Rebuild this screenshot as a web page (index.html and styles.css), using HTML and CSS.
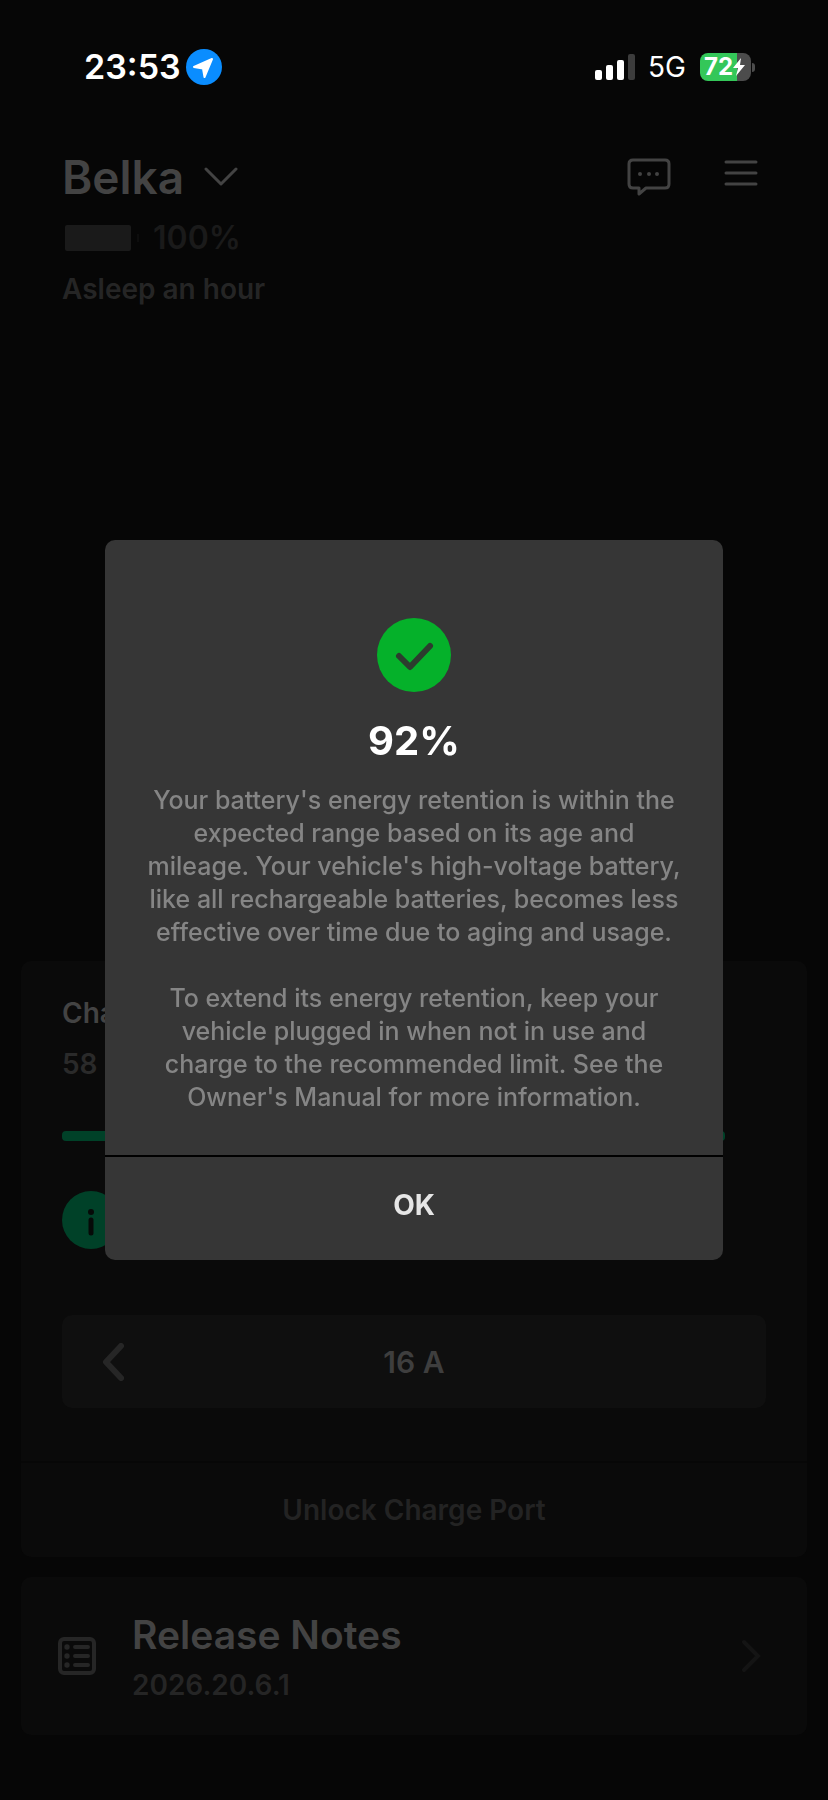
FILE: index.html
```html
<!DOCTYPE html>
<html lang="en">
<head>
    <meta charset="UTF-8">
    <meta name="viewport" content="width=device-width, initial-scale=1.0">
    <title>Belka</title>
    <link rel="stylesheet" href="styles.css">
</head>
<body>

    <!-- Status bar -->
    <div class="status-bar">
        <div class="status-left">
            <span class="time">23:53</span>
            <svg class="location" width="36" height="36" viewBox="0 0 36 36">
                <circle cx="18" cy="18" r="18" fill="#0a8dff"/>
                <path d="M26 10 L18.5 28 L17 19.5 L8 18 Z" fill="#fff" stroke="#fff" stroke-width="2" stroke-linejoin="round"/>
            </svg>
        </div>
        <div class="status-right">
            <svg width="41" height="28" viewBox="0 0 41 28">
                <rect x="0" y="17" width="7" height="10" rx="2" fill="#fff"/>
                <rect x="11" y="12" width="7" height="15" rx="2" fill="#fff"/>
                <rect x="22" y="7" width="7" height="20" rx="2" fill="#fff"/>
                <rect x="33" y="1" width="7" height="26" rx="2" fill="#3c3c3c"/>
            </svg>
            <span class="network">5G</span>
            <div class="battery">
                <span class="battery-level">72</span>
                <svg class="bolt" width="12" height="20" viewBox="0 0 12 20">
                    <path d="M8 1 L0 11 H5 L3 19 L12 8 H7 Z" fill="#fff"/>
                </svg>
            </div>
            <span class="battery-tip"></span>
        </div>
    </div>

    <!-- Vehicle header -->
    <header class="header">
        <div class="title-row">
            <h1>Belka</h1>
            <button class="icon-btn" aria-label="Switch vehicle">
                <svg width="34" height="20" viewBox="0 0 34 20"><path d="M2 2 L17 17 L32 2"/></svg>
            </button>
            <div class="header-actions">
                <button class="icon-btn" aria-label="Messages">
                    <svg width="44" height="38" viewBox="0 0 44 38">
                        <path d="M6 2 H38 Q42 2 42 6 V26 Q42 30 38 30 H19 L12 36 V30 H6 Q2 30 2 26 V6 Q2 2 6 2 Z"/>
                        <g class="dots"><circle cx="13" cy="16" r="2"/><circle cx="22" cy="16" r="2"/><circle cx="30" cy="16" r="2"/></g>
                    </svg>
                </button>
                <button class="icon-btn menu" aria-label="Menu">
                    <svg width="34" height="26" viewBox="0 0 34 26"><path d="M2 2 H32 M2 13 H32 M2 24 H32"/></svg>
                </button>
            </div>
        </div>
        <div class="charge-row">
            <span class="car-battery"></span>
            <span class="car-battery-tip"></span>
            <span>100%</span>
        </div>
        <p class="car-status">Asleep an hour</p>
    </header>

    <!-- Charging card -->
    <section class="card charge-card">
        <div class="charge-body">
            <p class="charge-title">Cha</p>
            <p class="charge-sub">58</p>
            <div class="progress"></div>
            <svg class="info" width="58" height="58" viewBox="0 0 58 58">
                <circle cx="29" cy="29" r="29" fill="#004128"/>
                <circle cx="29" cy="21" r="3" fill="#060a08"/>
                <path d="M29 29 V42" stroke="#060a08" stroke-width="5" stroke-linecap="round"/>
            </svg>
            <div class="stepper">
                <button class="icon-btn" aria-label="Decrease current">
                    <svg width="22" height="38" viewBox="0 0 22 38"><path d="M19 3 L4 19 L19 35"/></svg>
                </button>
                <span>16 A</span>
            </div>
        </div>
        <button class="unlock-btn">Unlock Charge Port</button>
    </section>

    <!-- Release notes card -->
    <a href="#" class="card notes-card">
        <svg class="notes-icon" width="38" height="38" viewBox="0 0 38 38">
            <rect x="2" y="2" width="34" height="34" rx="4"/>
            <path d="M17 10 H30 M17 19 H30 M17 28 H30"/>
            <g class="bullets"><circle cx="9" cy="10" r="2.7"/><circle cx="9" cy="19" r="2.7"/><circle cx="9" cy="28" r="2.7"/></g>
        </svg>
        <div class="notes-text">
            <h2>Release Notes</h2>
            <p>2026.20.6.1</p>
        </div>
        <svg class="notes-arrow" width="20" height="34" viewBox="0 0 20 34"><path d="M3 3 L17 17 L3 31"/></svg>
    </a>

    <!-- Battery health dialog -->
    <div class="overlay">
        <div class="modal" role="dialog" aria-modal="true" aria-labelledby="modal-title">
            <div class="modal-body">
                <svg width="74" height="74" viewBox="0 0 74 74">
                    <circle cx="37" cy="37" r="37" fill="#05b12a"/>
                    <path d="M22 38 L33 49 L53 28" fill="none" stroke="#2c3c2e" stroke-width="6" stroke-linecap="round" stroke-linejoin="round"/>
                </svg>
                <h2 id="modal-title">92%</h2>
                <p>Your battery's energy retention is within the expected range based on its age and mileage. Your vehicle's high-voltage battery, like all rechargeable batteries, becomes less effective over time due to aging and usage.</p>
                <p>To extend its energy retention, keep your vehicle plugged in when not in use and charge to the recommended limit. See the Owner's Manual for more information.</p>
            </div>
            <button class="ok-btn">OK</button>
        </div>
    </div>

</body>
</html>
```
FILE: styles.css
```css
* {
    box-sizing: border-box;
}
body {
    margin: 0;
    min-height: 100vh;
    background-color: #060606;
    color: #434343;
    font-family: Inter, 'Liberation Sans', sans-serif;
    font-size: 28px;
    font-weight: 600;
    line-height: 36px;
}
h1, h2, p {
    margin: 0;
    font-weight: 600;
}
button {
    font-family: inherit;
    font-weight: inherit;
    border: none;
    padding: 0;
    background: none;
    cursor: pointer;
}
svg {
    display: block;
    flex: none;
}

/* status bar */
.status-bar {
    display: flex;
    justify-content: space-between;
    align-items: center;
    height: 134px;
    padding: 0 73px 0 84px;
    color: #fff;
}
.status-left,
.status-right {
    display: flex;
    align-items: center;
}
.status-left {
    gap: 5px;
}
.time {
    font-size: 34px;
}
.network {
    margin-left: 12px;
    font-size: 28px;
    font-weight: 400;
}
.battery {
    display: flex;
    align-items: center;
    width: 51px;
    height: 28px;
    margin-left: 14px;
    padding-left: 4px;
    border-radius: 8px;
    background: linear-gradient(to right, #34c759 72%, #4c4c4c 72%);
}
.battery-level {
    font-size: 24px;
    font-weight: 700;
}
.battery-tip {
    width: 3px;
    height: 9px;
    margin-left: 1px;
    border-radius: 0 3px 3px 0;
    background: #4c4c4c;
}

/* vehicle header */
.header {
    padding: 14px 70px 0 62px;
}
.title-row {
    display: flex;
    align-items: center;
    height: 58px;
}
h1 {
    font-size: 46px;
    line-height: 58px;
    margin-right: 20px;
}
.icon-btn svg {
    fill: none;
    stroke: #434343;
    stroke-width: 3;
    stroke-linecap: round;
    stroke-linejoin: round;
}
.icon-btn .dots {
    fill: #434343;
    stroke: none;
}
.header-actions {
    display: flex;
    align-items: center;
    gap: 53px;
    margin-left: auto;
}
.menu {
    margin-bottom: 8px;
}
.charge-row {
    display: flex;
    align-items: center;
    margin-top: 14px;
    font-size: 32px;
    color: #1a1a1a;
}
.car-battery {
    width: 66px;
    height: 26px;
    margin-left: 3px;
    border-radius: 2px;
    background: #1a1a1a;
}
.car-battery-tip {
    width: 2px;
    height: 8px;
    margin: 0 14px 0 6px;
    background: #0d0d0d;
}
.car-status {
    margin-top: 15px;
    color: #252525;
}

/* cards */
.card {
    display: block;
    margin: 0 21px;
    border-radius: 10px;
    background: #0a0a0a;
}
.charge-card {
    margin-top: 654px;
}
.charge-body {
    padding: 34px 41px 53px;
}
.charge-sub {
    margin-top: 15px;
    color: #2a2a2a;
}
.progress {
    height: 10px;
    margin: 49px 41px 50px 0;
    border-radius: 4px;
    background: #004128;
}
.stepper {
    display: flex;
    align-items: center;
    height: 93px;
    margin-top: 66px;
    padding: 0 40px;
    border-radius: 10px;
    background: #0f0f0f;
    font-size: 30px;
    color: #3e3e3e;
}
.stepper svg {
    stroke: #262626;
    stroke-width: 6;
}
.stepper span {
    flex: 1;
    margin-right: 22px;
    text-align: center;
}
.unlock-btn {
    width: 100%;
    height: 96px;
    border-top: 2px solid #070707;
    font-size: 28px;
    color: #232323;
}
.notes-card {
    display: flex;
    align-items: center;
    margin-top: 20px;
    padding: 32px 46px 32px 37px;
    color: #434343;
    text-decoration: none;
}
.notes-icon,
.notes-arrow {
    fill: none;
    stroke: #262626;
    stroke-width: 4;
    stroke-linecap: round;
}
.notes-icon .bullets {
    fill: #262626;
    stroke: none;
}
.notes-arrow {
    stroke: #141414;
}
.notes-text {
    flex: 1;
    margin-left: 36px;
}
.notes-text h2 {
    font-size: 39px;
    line-height: 52px;
}
.notes-text p {
    margin-top: 6px;
    color: #252525;
}

/* dialog */
.overlay {
    position: fixed;
    inset: 0;
    display: flex;
    align-items: center;
    justify-content: center;
    padding: 0 105px;
}
.modal {
    width: 100%;
    border-radius: 10px;
    background: #363636;
    text-align: center;
}
.modal-body {
    display: flex;
    flex-direction: column;
    align-items: center;
    padding: 78px 36px 41px;
    color: #858585;
}
.modal-body h2 {
    margin: 24px 0 18px;
    font-size: 40px;
    font-weight: 700;
    line-height: 50px;
    color: #fff;
}
.modal-body p {
    font-size: 25px;
    font-weight: 500;
    line-height: 33px;
}
.modal-body p + p {
    margin-top: 33px;
}
.ok-btn {
    width: 100%;
    height: 105px;
    padding-bottom: 8px;
    border-top: 2px solid #000;
    font-size: 28px;
    font-weight: 700;
    color: #e6e6e6;
}
```
